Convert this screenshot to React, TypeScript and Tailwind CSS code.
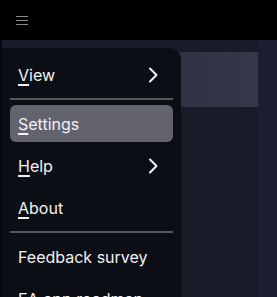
type Item = { label: string; key?: number; submenu?: boolean; active?: boolean };

function Label({ text, k }: { text: string; k?: number }) {
  if (k === undefined) return <span>{text}</span>;
  return (
    <span>
      {text.slice(0, k)}
      <span className="underline underline-offset-[3px] decoration-[1.5px]">{text[k]}</span>
      {text.slice(k + 1)}
    </span>
  );
}

function Chevron() {
  return (
    <svg width="11" height="16" viewBox="0 0 11 16" fill="none">
      <path d="M2 1.5 L8.5 8 L2 14.5" stroke="currentColor" strokeWidth="2" strokeLinecap="round" strokeLinejoin="round" />
    </svg>
  );
}

function MenuRow({ item }: { item: Item }) {
  return (
    <div
      className={
        "flex h-[37px] items-center justify-between rounded-md pl-2 pr-[14px] " +
        (item.active ? "bg-[#62636e]" : "")
      }
    >
      <Label text={item.label} k={item.key} />
      {item.submenu && <Chevron />}
    </div>
  );
}

export default function App() {
  const groupA: Item[] = [{ label: "View", key: 0, submenu: true }];
  const groupB: Item[] = [
    { label: "Settings", key: 0, active: true },
    { label: "Help", key: 0, submenu: true },
    { label: "About", key: 0 },
  ];
  const groupC: Item[] = [{ label: "Feedback survey" }, { label: "EA app roadmap" }];

  return (
    <div
      className="relative h-[297px] w-[277px] overflow-hidden bg-[#191c28] text-[16px] text-[#f2f2f4]"
      style={{ fontFamily: "Inter, 'Noto Sans', sans-serif" }}
    >
      <div className="flex h-10 items-center bg-black pl-4">
        <div className="flex w-3 flex-col gap-[3px]">
          <div className="h-px bg-[#8a8a8a]" />
          <div className="h-px bg-[#8a8a8a]" />
          <div className="h-px bg-[#8a8a8a]" />
        </div>
      </div>

      <div className="flex h-[257px]">
        <div className="w-[2px] bg-[#08090c]" />
        <div className="flex-1 pt-3">
          <div className="ml-[60px] h-[55px] w-[196px] bg-gradient-to-r from-[#24273a] via-[#2e3042] to-[#36384a]" />
        </div>
        <div className="w-[19px] bg-[#1c1f30]" />
      </div>

      <div className="absolute left-[2px] top-[48px] w-[179px] rounded-tr-[12px] bg-[#0c0e15] px-2 pt-2 pb-4">
        {groupA.map((it) => (
          <MenuRow key={it.label} item={it} />
        ))}
        <div className="my-[5px] h-[2px] bg-[#55565e]" />
        <div className="flex flex-col gap-[5px]">
          {groupB.map((it) => (
            <MenuRow key={it.label} item={it} />
          ))}
        </div>
        <div className="my-[5px] h-[2px] bg-[#55565e]" />
        <div className="flex flex-col gap-[5px]">
          {groupC.map((it) => (
            <MenuRow key={it.label} item={it} />
          ))}
        </div>
      </div>
    </div>
  );
}
